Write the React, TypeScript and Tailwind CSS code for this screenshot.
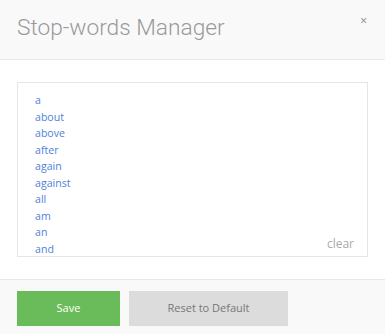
import React from "react";

const words = ["a", "about", "above", "after", "again", "against", "all", "am", "an", "and"];

export default function App() {
  return (
    <div className="w-[385px] h-[334px] bg-white flex flex-col overflow-hidden" style={{ fontFamily: "'Open Sans', sans-serif" }}>
      <div className="h-[60px] shrink-0 bg-[#f9f9f9] border-b border-[#e8e8e8] flex items-center justify-between pl-[17px] pr-[18px]">
        <h1 className="text-[22.7px] font-light text-[#999] leading-none pb-[3px]" style={{ fontFamily: "Roboto, sans-serif" }}>
          Stop-words Manager
        </h1>
        <button className="self-start mt-[15px] text-[#888] text-[12px] leading-none">×</button>
      </div>

      <div className="flex-1 px-[17px] py-[22px]">
        <div className="relative h-[175px] border border-[#e5e5e5] overflow-hidden">
          <ul className="pt-[9px] pl-[17px] text-[10.6px] leading-[16.5px] text-[#4f7fdc]">
            {words.map((w) => (
              <li key={w}>{w}</li>
            ))}
          </ul>
          <span className="absolute right-[13px] bottom-[3px] text-[12px] text-[#aaa]">clear</span>
        </div>
      </div>

      <div className="h-[55px] shrink-0 bg-[#f9f9f9] border-t border-[#e8e8e8] flex gap-[9px] pl-[17px] pt-[11px]">
        <button className="w-[103px] h-[35px] bg-[#6abb5a] text-white text-[11px]">Save</button>
        <button className="w-[159px] h-[35px] bg-[#dcdcdc] text-[#777] text-[11px]">Reset to Default</button>
      </div>
    </div>
  );
}
